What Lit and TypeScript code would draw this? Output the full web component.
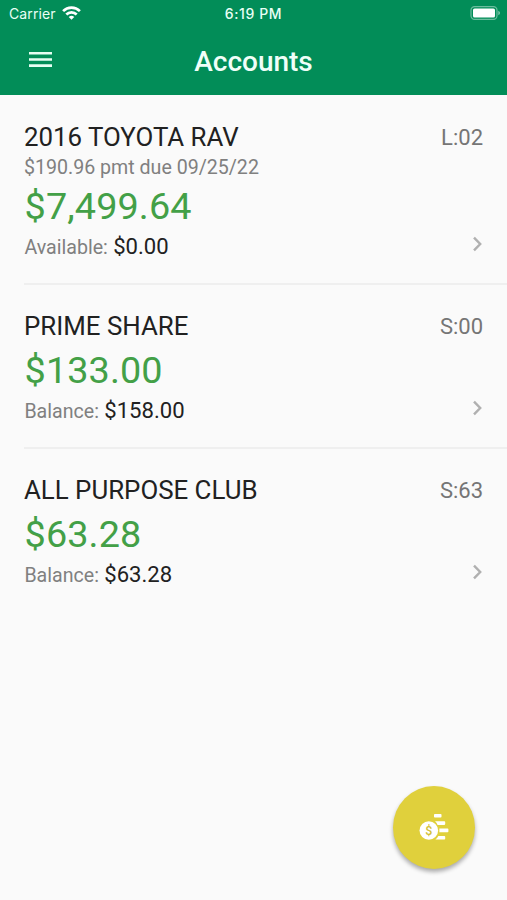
import { LitElement, html, css, nothing } from "lit";
import { customElement, property } from "lit/decorators.js";

interface Account {
  name: string;
  code: string;
  due?: string;
  amount: string;
  label: string;
  value: string;
}

const ACCOUNTS: Account[] = [
  { name: "2016 TOYOTA RAV", code: "L:02", due: "$190.96 pmt due 09/25/22", amount: "$7,499.64", label: "Available:", value: "$0.00" },
  { name: "PRIME SHARE", code: "S:00", amount: "$133.00", label: "Balance:", value: "$158.00" },
  { name: "ALL PURPOSE CLUB", code: "S:63", amount: "$63.28", label: "Balance:", value: "$63.28" },
];

@customElement("status-bar")
class StatusBar extends LitElement {
  static styles = css`
    :host {
      display: grid;
      grid-template-columns: 1fr auto 1fr;
      align-items: center;
      height: 27px;
      padding: 0 7px 0 9px;
      color: #e9fff5;
      font: 400 14px/27px Inter, sans-serif;
    }
    .left { display: flex; align-items: center; gap: 6px; letter-spacing: 0.1px; }
    .time { font-weight: 500; font-size: 14px; letter-spacing: 0.6px; margin-right: 2px; }
    .right { display: flex; justify-content: flex-end; }
    svg { display: block; margin-top: -1px; }
  `;
  render() {
    return html`
      <div class="left">
        <span>Carrier</span>
        <svg width="19" height="14" viewBox="0 0 19 14" fill="none" stroke="#fff" stroke-width="2.7">
          <path d="M1.1 5.1a12 12 0 0 1 16.8 0" />
          <path d="M4.3 8.5a7.4 7.4 0 0 1 10.4 0" />
          <path d="M9.5 13.8L6.7 11a4 4 0 0 1 5.6 0z" fill="#fff" stroke="none" />
        </svg>
      </div>
      <div class="time">6:19 PM</div>
      <div class="right">
        <svg width="30" height="14" viewBox="0 0 30 14">
          <rect x="1" y="0.6" width="26" height="12.8" rx="3.6" fill="none" stroke="#fff" stroke-opacity=".42" stroke-width="1.2" />
          <rect x="3" y="2.5" width="22" height="9" rx="1.6" fill="#fff" />
          <path d="M28.3 4.8c2.2.8 2.2 3.6 0 4.4z" fill="#fff" fill-opacity=".5" />
        </svg>
      </div>
    `;
  }
}

@customElement("account-row")
class AccountRow extends LitElement {
  @property({ attribute: false }) account!: Account;
  static styles = css`
    :host {
      display: block;
      margin-left: 24px;
      padding: 25px 24px 21px 0;
      color: #212121;
    }
    .line { display: flex; justify-content: space-between; }
    .name { font-size: 25.85px; line-height: 35px; }
    .code { font-size: 22px; line-height: 35px; color: #757575; }
    .due { font-size: 19.6px; line-height: 25px; color: #808080; }
    .amount { padding-left: 0.6px; font-size: 37.8px; line-height: 52px; letter-spacing: 0.1px; color: #43a047; }
    .foot { height: 30px; }
    .text { padding-left: 0.4px; line-height: 29px; }
    .label { font-size: 19.6px; color: #808080; }
    .value { margin-left: 1.4px; font-size: 22.1px; }
    svg { display: block; margin-top: 4px; }
  `;
  render() {
    const a = this.account;
    return html`
      <div class="line"><span class="name">${a.name}</span><span class="code">${a.code}</span></div>
      ${a.due ? html`<div class="due">${a.due}</div>` : nothing}
      <div class="amount">${a.amount}</div>
      <div class="line foot">
        <div class="text"><span class="label">${a.label}</span> <span class="value">${a.value}</span></div>
        <svg width="11" height="16" viewBox="0 0 11 16" fill="none" stroke="#b0b0b0" stroke-width="2.4">
          <path d="M2 1.7L8.2 8L2 14.3" />
        </svg>
      </div>
    `;
  }
}

@customElement("app-root")
class AppRoot extends LitElement {
  static styles = css`
    :host {
      display: block;
      position: relative;
      height: 900px;
      overflow: hidden;
      background: #fafafa;
      font-family: Roboto, sans-serif;
    }
    header { height: 95px; background: #028d58; }
    .toolbar {
      display: grid;
      grid-template-columns: 1fr auto 1fr;
      align-items: center;
      height: 68px;
      padding: 0 29px;
    }
    h1 { margin: 0; padding-top: 1px; font-size: 28px; line-height: 67px; font-weight: 500; color: #f0fff8; }
    .toolbar svg { display: block; margin-top: -4px; }
    account-row + account-row { padding-top: 24px; border-top: 2px solid #efefef; }
    .fab {
      position: absolute;
      left: 393px;
      top: 786px;
      display: grid;
      place-items: center;
      width: 82px;
      height: 83px;
      padding: 0;
      border: 0;
      border-radius: 50%;
      background: #e0d03c;
      box-shadow: 0 3px 4px rgba(0, 0, 0, 0.32);
    }
  `;
  render() {
    return html`
      <header>
        <status-bar></status-bar>
        <div class="toolbar">
          <svg width="23" height="17" viewBox="0 0 23 17" fill="#e6fff3">
            <path d="M0 1h23v2.6H0zM0 7.2h23v2.6H0zM0 13.3h23v2.6H0z" />
          </svg>
          <h1>Accounts</h1>
        </div>
      </header>
      <main>${ACCOUNTS.map((a) => html`<account-row .account=${a}></account-row>`)}</main>
      <button class="fab" aria-label="Payments">
        <svg width="30" height="27" viewBox="0 0 30 27" fill="#fff">
          <circle cx="9.8" cy="16.5" r="9.3" />
          <rect x="15" y="0" width="7.5" height="3.6" rx=".8" />
          <path d="M16 7.3h9.4q.8 0 .8.8v2q0 .8-.8.8h-6.8q-1-2.3-2.6-3.6z" />
          <path d="M20.4 14.6h8.2q.8 0 .8.8v2q0 .8-.8.8h-8.2z" />
          <path d="M19.3 21.9h6.1q.8 0 .8.8v2q0 .8-.8.8h-9q1.9-1.5 2.9-3.6z" />
          <text x="9.8" y="20.8" text-anchor="middle" font-family="Roboto, sans-serif" font-size="12.5" font-weight="500" fill="#d3bf36">$</text>
        </svg>
      </button>
    `;
  }
}
